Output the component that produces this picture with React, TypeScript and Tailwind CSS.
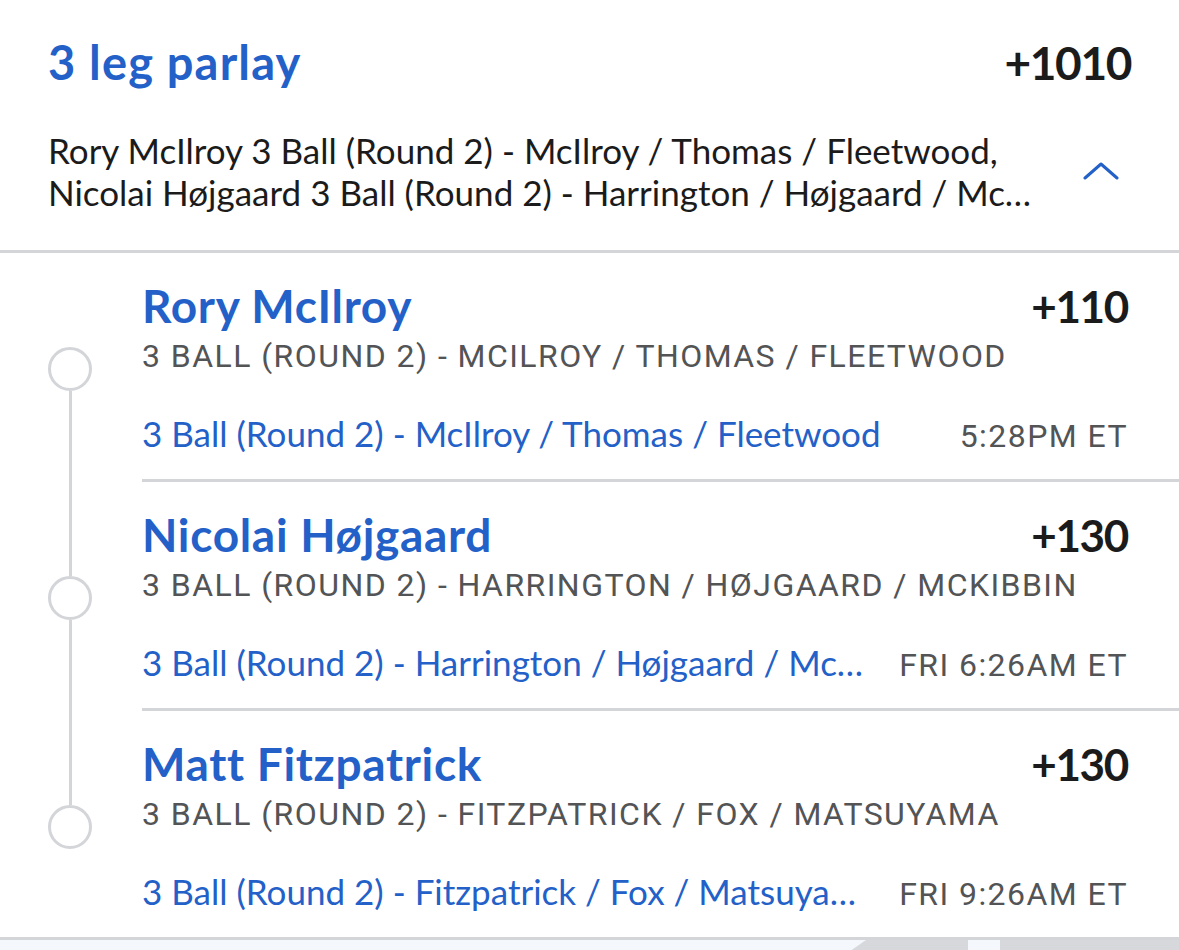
import React from 'react';

const BLUE = 'text-[#2361c8]';

type Leg = {
  name: string;
  odds: string;
  market: string;
  link: string;
  time: string;
};

const LEGS: Leg[] = [
  {
    name: 'Rory McIlroy',
    odds: '+110',
    market: '3 BALL (ROUND 2) - MCILROY / THOMAS / FLEETWOOD',
    link: '3 Ball (Round 2) - McIlroy / Thomas / Fleetwood',
    time: '5:28PM ET',
  },
  {
    name: 'Nicolai Højgaard',
    odds: '+130',
    market: '3 BALL (ROUND 2) - HARRINGTON / HØJGAARD / MCKIBBIN',
    link: '3 Ball (Round 2) - Harrington / Højgaard / McKibbin',
    time: 'FRI 6:26AM ET',
  },
  {
    name: 'Matt Fitzpatrick',
    odds: '+130',
    market: '3 BALL (ROUND 2) - FITZPATRICK / FOX / MATSUYAMA',
    link: '3 Ball (Round 2) - Fitzpatrick / Fox / Matsuyama',
    time: 'FRI 9:26AM ET',
  },
];

function LegRow({ leg, index, total }: { leg: Leg; index: number; total: number }) {
  const first = index === 0;
  const last = index === total - 1;
  return (
    <div className="flex">
      {/* timeline */}
      <div className="flex w-[142px] shrink-0 flex-col items-center pr-[2px]">
        <div className={`h-[94px] w-[3px] ${first ? 'bg-transparent' : 'bg-[#d3d5d9]'}`} />
        <div className="h-[44px] w-[44px] rounded-full border-[3px] border-[#d3d5d9] bg-white" />
        <div className={`w-[3px] flex-1 ${last ? 'bg-transparent' : 'bg-[#d3d5d9]'}`} />
      </div>

      <div className={`min-w-0 flex-1 pr-[51px] pt-[27px] pb-[21px] ${last ? '' : 'border-b-[3px] border-[#d3d5d9]'}`}>
        <div className="flex items-baseline justify-between">
          <span className={`text-[46px] font-bold leading-[52px] tracking-[0.015em] ${BLUE}`}>{leg.name}</span>
          <span className="text-[44px] font-bold leading-[52px] tracking-[-0.03em] text-[#1b1b1b]">{leg.odds}</span>
        </div>
        <div className="font-['Roboto',sans-serif] text-[32px] leading-[48px] tracking-[0.045em] text-[#535456]">
          {leg.market}
        </div>
        <div className="mt-[31px] flex items-baseline gap-[34px]">
          <span className={`min-w-0 flex-1 truncate text-[35px] leading-[44px] ${BLUE}`}>{leg.link}</span>
          <span className="shrink-0 font-['Roboto',sans-serif] text-[32px] leading-[44px] tracking-[0.045em] text-[#535456]">
            {leg.time}
          </span>
        </div>
      </div>
    </div>
  );
}

export default function App() {
  return (
    <div className="h-[950px] w-[1179px] overflow-hidden bg-white font-['Lato',sans-serif]">
      {/* Parlay header */}
      <div className="border-b-[3px] border-[#d3d5d9] px-[48px] pt-[36px] pb-[37px]">
        <div className="flex items-baseline justify-between">
          <h1 className={`text-[47px] font-bold leading-[52px] tracking-[0.025em] ${BLUE}`}>3 leg parlay</h1>
          <span className="text-[46px] font-bold leading-[52px] tracking-[-0.03em] text-[#1b1b1b]">+1010</span>
        </div>
        <div className="mt-[40px] flex items-center justify-between">
          <div className="w-[995px] text-[35px] leading-[42px] text-[#1b1b1b]">
            <div className="whitespace-nowrap">Rory McIlroy 3 Ball (Round 2) - McIlroy / Thomas / Fleetwood,</div>
            <div className="truncate">
              Nicolai Højgaard 3 Ball (Round 2) - Harrington / Højgaard / McKibbin, Matt Fitzpatrick 3 Ball (Round 2) - Fitzpatrick / Fox / Matsuyama
            </div>
          </div>
          <svg width="36" height="20" viewBox="0 0 36 20" className="mr-[12px]">
            <polyline points="2,17 18,3 34,17" fill="none" stroke="#2361c8" strokeWidth="3" strokeLinecap="round" strokeLinejoin="round" />
          </svg>
        </div>
      </div>

      {/* Legs */}
      <div className="border-b-[3px] border-[#d3d5d9]">
        {LEGS.map((leg, i) => (
          <LegRow key={leg.name} leg={leg} index={i} total={LEGS.length} />
        ))}
      </div>

      {/* peek of the next panel */}
      <svg width="1179" height="14" viewBox="0 0 1179 14" className="block">
        <rect x="0" y="0" width="1179" height="14" fill="#f4f7fb" />
        <polygon points="866,0 968,0 968,14 846,14" fill="#d6d8dc" />
        <rect x="1000" y="0" width="179" height="14" fill="#d6d8dc" />
      </svg>
    </div>
  );
}
